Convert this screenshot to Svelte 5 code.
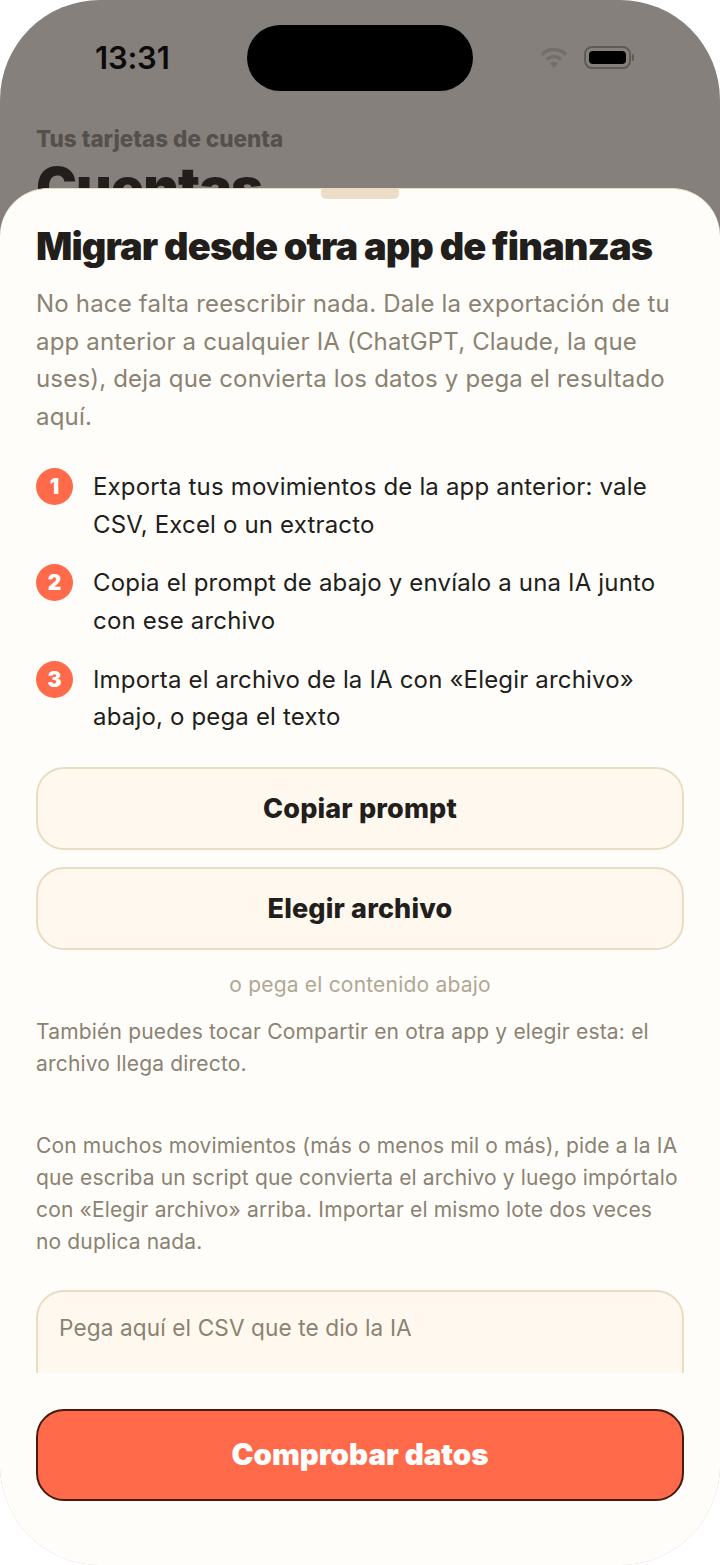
<script>
  const steps = [
    "Exporta tus movimientos de la app anterior: vale CSV, Excel o un extracto",
    "Copia el prompt de abajo y envíalo a una IA junto con ese archivo",
    "Importa el archivo de la IA con «Elegir archivo» abajo, o pega el texto"
  ];
</script>

<div class="phone">
  <div class="status">
    <span class="time">13:31</span>
    <div class="island"></div>
    <div class="status-icons">
      <svg class="wifi" width="30" height="24" viewBox="0 0 30 24" fill="none" stroke="#726e6a" stroke-width="3.4">
        <path d="M3 8.5a17 17 0 0 1 24 0" />
        <path d="M8 13.5a10 10 0 0 1 14 0" />
        <path d="M15 22l-4-4.6a5.6 5.6 0 0 1 8 0z" fill="#726e6a" stroke="none" />
      </svg>
      <div class="battery"><div class="battery-fill"></div></div>
      <div class="battery-tip"></div>
    </div>
  </div>
  <div class="behind">
    <div class="eyebrow">Tus tarjetas de cuenta</div>
    <div class="big-title">Cuentas</div>
  </div>

  <div class="sheet">
    <div class="grabber"></div>
    <div class="scroll">
      <h1>Migrar desde otra app de finanzas</h1>
      <p class="lead">No hace falta reescribir nada. Dale la exportación de tu app anterior a cualquier IA (ChatGPT, Claude, la que uses), deja que convierta los datos y pega el resultado aquí.</p>
      <ol class="steps">
        {#each steps as step, i}
          <li>
            <span class="num">{i + 1}</span>
            <span class="step-text">{step}</span>
          </li>
        {/each}
      </ol>
      <button class="soft">Copiar prompt</button>
      <button class="soft second">Elegir archivo</button>
      <div class="or">o pega el contenido abajo</div>
      <p class="note">También puedes tocar Compartir en otra app y elegir esta: el archivo llega directo.</p>
      <p class="note lots">Con muchos movimientos (más o menos mil o más), pide a la IA que escriba un script que convierta el archivo y luego impórtalo con «Elegir archivo» arriba. Importar el mismo lote dos veces no duplica nada.</p>
      <div class="paste">Pega aquí el CSV que te dio la IA</div>
    </div>
    <div class="footer">
      <button class="primary">Comprobar datos</button>
    </div>
  </div>
</div>

<style>
  :global(body) {
    margin: 0;
    background: #fff;
  }

  .phone {
    position: relative;
    width: 720px;
    height: 1565px;
    overflow: hidden;
    border-radius: 100px;
    background: #85807b;
    font-family: Inter, "Liberation Sans", sans-serif;
    color: #211e1c;
  }

  .status {
    display: flex;
    align-items: center;
    justify-content: space-between;
    height: 66px;
    padding: 25px 86px 0 95px;
  }

  .time {
    font-size: 31px;
    font-weight: 600;
    color: #0c0b0a;
    letter-spacing: -0.2px;
    margin-top: -1px;
  }

  .island {
    position: absolute;
    left: 247px;
    top: 25px;
    width: 226px;
    height: 66px;
    border-radius: 33px;
    background: #000;
  }

  .status-icons {
    display: flex;
    align-items: center;
    margin-top: -1px;
  }

  .wifi {
    margin-right: 15px;
  }

  .battery {
    box-sizing: border-box;
    width: 47px;
    height: 23px;
    padding: 3px;
    border: 2px solid #5e5a57;
    border-radius: 8px;
  }

  .battery-fill {
    height: 100%;
    border-radius: 4px;
    background: #000;
  }

  .battery-tip {
    width: 2px;
    height: 7px;
    margin-left: 1px;
    border-radius: 0 2px 2px 0;
    background: #5e5a57;
  }

  .behind {
    padding: 35px 36px 0;
  }

  .eyebrow {
    font-size: 22.5px;
    font-weight: 800;
    line-height: 26px;
    color: #55504b;
  }

  .big-title {
    margin-top: 7px;
    font-size: 55px;
    font-weight: 900;
    line-height: 56px;
    letter-spacing: -1px;
    color: #211e1c;
  }

  .sheet {
    position: absolute;
    left: 0;
    right: 0;
    top: 188px;
    bottom: 0;
    display: flex;
    flex-direction: column;
    border-top: 1px solid #ead9bd;
    border-radius: 48px 48px 0 0;
    background: #fffdf9;
  }

  .grabber {
    position: absolute;
    left: 321px;
    top: 0;
    width: 78px;
    height: 10px;
    border-radius: 2px 2px 5px 5px;
    background: #ecdcc8;
  }

  .scroll {
    flex: 1;
    min-height: 0;
    overflow: hidden;
    padding: 0 36px;
  }

  h1 {
    margin: 35px 0 0;
    font-size: 38px;
    font-weight: 900;
    line-height: 44px;
    letter-spacing: -0.9px;
    color: #211e1c;
  }

  .lead {
    margin: 17px 0 0;
    font-size: 24px;
    line-height: 37.7px;
    letter-spacing: 0.18px;
    color: #8a8272;
  }

  .steps {
    display: flex;
    flex-direction: column;
    gap: 21px;
    margin: 32px 0 0;
    padding: 0;
    list-style: none;
  }

  .steps li {
    display: flex;
    gap: 20px;
  }

  .num {
    flex: none;
    display: flex;
    align-items: center;
    justify-content: center;
    width: 37px;
    height: 37px;
    border-radius: 50%;
    background: #ff6b4a;
    color: #fff;
    font-size: 21px;
    font-weight: 900;
  }

  .step-text {
    font-size: 24px;
    line-height: 37.7px;
    letter-spacing: 0.17px;
    color: #211e1c;
  }

  button {
    display: block;
    width: 100%;
    font-family: inherit;
  }

  .soft {
    box-sizing: border-box;
    height: 83px;
    margin-top: 31px;
    border: 2px solid #e9dcc2;
    border-radius: 28px;
    background: #fff8ee;
    color: #211e1c;
    font-size: 27px;
    font-weight: 800;
    letter-spacing: 0.15px;
  }

  .soft.second {
    margin-top: 17px;
  }

  .or {
    margin-top: 21px;
    font-size: 21px;
    line-height: 28px;
    letter-spacing: 0.2px;
    text-align: center;
    color: #b0a895;
  }

  .note {
    margin: 17px 0 0;
    font-size: 21px;
    line-height: 32px;
    letter-spacing: 0.18px;
    color: #8a8272;
  }

  .note.lots {
    margin-top: 50px;
    padding-right: 4px;
    letter-spacing: 0.15px;
  }

  .paste {
    box-sizing: border-box;
    height: 160px;
    margin-top: 32px;
    padding: 20px 21px;
    border: 2px solid #e9dcc2;
    border-radius: 28px;
    background: #fff8ee;
    font-size: 22.6px;
    line-height: 32px;
    letter-spacing: 0.12px;
    color: #8a8272;
  }

  .footer {
    flex: none;
    height: 192px;
    box-sizing: border-box;
    padding: 36px 36px 0;
    background: #fffdf9;
  }

  .primary {
    box-sizing: border-box;
    height: 92px;
    padding-bottom: 4px;
    border: 2px solid #4a1a0e;
    border-radius: 28px;
    background: #ff6b4a;
    color: #fff;
    font-size: 29.5px;
    font-weight: 900;
  }
</style>
